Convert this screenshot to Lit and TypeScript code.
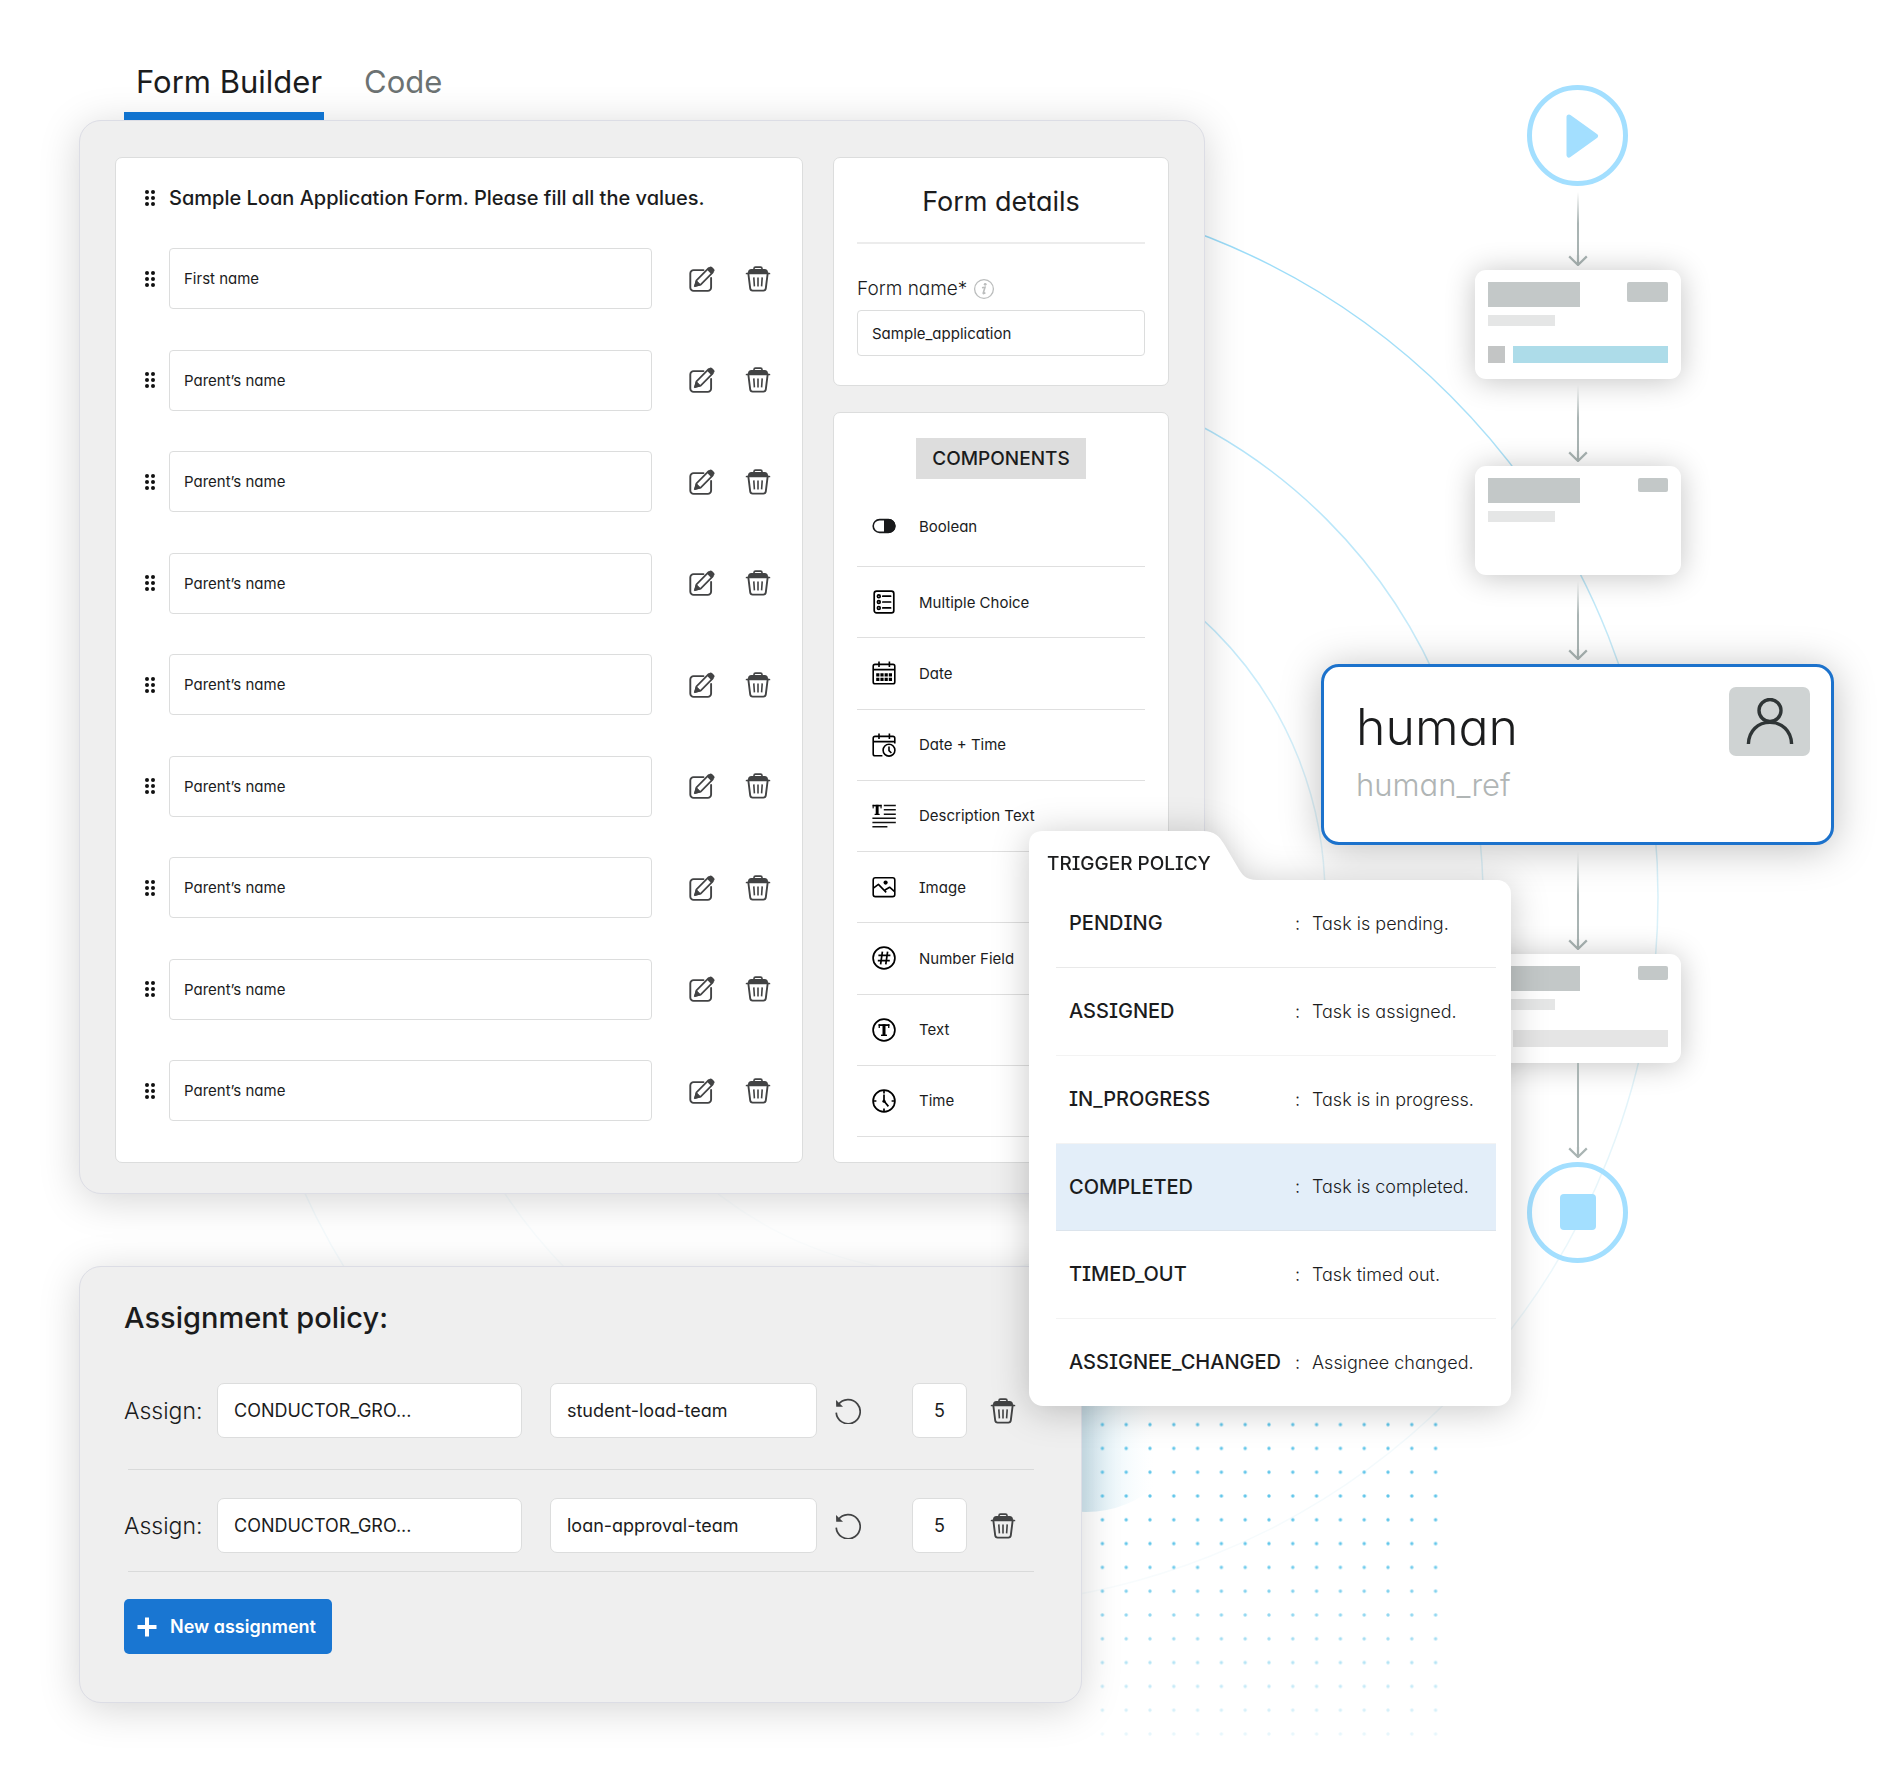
import { LitElement, html, css, svg, nothing } from "lit";
import { customElement, property } from "lit/decorators.js";

type IconName =
  | "grip" | "edit" | "trash" | "reset" | "plus" | "info" | "person"
  | "boolean" | "choice" | "date" | "datetime" | "description"
  | "image" | "number" | "text" | "time";

const ICONS: Record<IconName, { box: string; body: unknown }> = {
  grip: {
    box: "0 0 10 16",
    body: svg`<g fill="#111"><circle cx="2" cy="2" r="2"/><circle cx="8" cy="2" r="2"/><circle cx="2" cy="8" r="2"/><circle cx="8" cy="8" r="2"/><circle cx="2" cy="14" r="2"/><circle cx="8" cy="14" r="2"/></g>`,
  },
  edit: {
    box: "0 0 26 26",
    body: svg`<path d="M14.5 4.1H4.6A3.3 3.3 0 0 0 1.3 7.4V21.6A3.3 3.3 0 0 0 4.6 24.9H18.8A3.3 3.3 0 0 0 22.1 21.6V12" fill="none" stroke="#424344" stroke-width="1.9" stroke-linecap="round"/>
      <path d="M7.5 14.4L19.6 2.2L23.8 6.4L11.7 18.6L6.2 19.8Z" fill="#fff" stroke="#424344" stroke-width="1.7" stroke-linejoin="round"/>
      <path d="M7.3 14.6L11.5 18.8L5.4 20.6Z" fill="#424344" stroke="#424344" stroke-linejoin="round"/>
      <path d="M17.8 3.6L20.4 1C21.2.2 22.2.2 23 1L25 3C25.8 3.8 25.8 4.8 25 5.6L22.4 8.2Z" fill="#424344"/>`,
  },
  trash: {
    box: "0 0 26 26",
    body: svg`<path d="M9 3.4V2.6A1.5 1.5 0 0 1 10.5 1.1H15.5A1.5 1.5 0 0 1 17 2.6V3.4" fill="none" stroke="#424344" stroke-width="1.6"/>
      <path d="M3 6.6C3 4.3 4.2 3 6.4 3H19.6C21.8 3 23 4.3 23 6.6L25.2 6.9V8.3H.8V6.9Z" fill="#424344"/>
      <path d="M3.4 8L5.2 22.4A2.5 2.5 0 0 0 7.7 24.6H18.3A2.5 2.5 0 0 0 20.8 22.4L22.6 8" fill="none" stroke="#424344" stroke-width="1.9"/>
      <path d="M8.8 11.4L9.4 20.4M13 11.4V20.4M17.2 11.4L16.6 20.4" stroke="#424344" stroke-width="1.6"/>`,
  },
  reset: {
    box: "0 0 26 26",
    body: svg`<path d="M3.2 7A12 12 0 1 1 1.2 14.6" fill="none" stroke="#424344" stroke-width="1.7"/>
      <path d="M1 2L1.2 8.8H8Z" fill="#424344"/>`,
  },
  plus: { box: "0 0 20 20", body: svg`<path d="M10 .5V19.5M.5 10H19.5" stroke="#fff" stroke-width="4"/>` },
  info: {
    box: "0 0 22 22",
    body: svg`<circle cx="11" cy="11" r="9.4" fill="none" stroke="#bbbdbd" stroke-width="1.3"/>
      <circle cx="12.2" cy="6.3" r="1.4" fill="#bbbdbd"/><path d="M9 9.8L12 9.2L10.2 15.2Q10.2 16.2 12.4 14.6" fill="none" stroke="#bbbdbd" stroke-width="1.6"/>`,
  },
  person: {
    box: "0 0 48 48",
    body: svg`<g fill="none" stroke="#2f3536" stroke-width="3.4"><circle cx="24" cy="12.5" r="11"/><path d="M2.4 46C2.8 32.6 12 24.400 24 24.400S45.200 32.600 45.600 46"/></g>`,
  },
  boolean: {
    box: "0 0 24 24",
    body: svg`<rect x="1.200" y="5.600" width="21.600" height="12.800" rx="6.400" fill="#fff" stroke="#17181a" stroke-width="1.600"/><path d="M12 5H16.600A7 7 0 0 1 16.600 19H12Z" fill="#17181a"/>`,
  },
  choice: {
    box: "0 0 24 24",
    body: svg`<g fill="none" stroke="#000" stroke-width="1.700"><rect x="2.200" y="1.200" width="19.600" height="21.600" rx="2.400"/><circle cx="6.800" cy="6.200" r="1.400"/><circle cx="6.800" cy="12" r="1.400"/><circle cx="6.800" cy="17.900" r="1.400"/><path d="M10.800 6.200H18.600M10.800 12H18.600M10.800 17.900H18.600" stroke-linecap="round"/></g>`,
  },
  date: {
    box: "0 0 24 24",
    body: svg`<g fill="none" stroke="#000" stroke-width="1.600"><rect x="1.200" y="3.400" width="21.600" height="19.400" rx="1.800"/><path d="M1.200 8.600H22.800M7 .6V6M17.400 .6V6"/></g><g fill="#000"><path d="M4.200 12.200h3.200v3.200h-3.200zM8.400 12.200h3.200v3.200h-3.200zM12.600 12.200h3.200v3.200h-3.200zM16.800 12.200h3.200v3.200h-3.200zM4.200 16.700h3.200v3.200h-3.200zM8.400 16.700h3.200v3.200h-3.200zM12.600 16.700h3.200v3.200h-3.200zM16.800 16.700h3.200v3.200h-3.200z"/></g>`,
  },
  datetime: {
    box: "0 0 24 24",
    body: svg`<g fill="none" stroke="#000" stroke-width="1.600"><path d="M10.400 22.800H3A1.800 1.800 0 0 1 1.200 21V5.200A1.800 1.800 0 0 1 3 3.400H21A1.800 1.800 0 0 1 22.800 5.200V10.400M1.200 8.600H22.800M7 .6V6M17.400 .6V6"/><circle cx="17" cy="17.200" r="5.900" fill="#fff"/><path d="M17 13.400V17.600L19.400 20"/></g>`,
  },
  description: {
    box: "0 0 24 24",
    body: svg`<g stroke="#111" stroke-width="1.500"><path d="M11.800 1.400H23.800M11.800 5.800H23.800M11.800 10.200H23.800M.4 14.200H23.800M.4 18.600H23.800M.4 22.800H15.400"/></g><g fill="#000"><rect x=".6" y=".8" width="9" height="1.600"/><rect x=".6" y=".8" width="1.100" height="3.600"/><rect x="8.500" y=".8" width="1.100" height="3.600"/><rect x="3.700" y=".8" width="2.900" height="9.800"/><rect x="2.600" y="9.800" width="5.100" height="1.200"/></g>`,
  },
  image: {
    box: "0 0 24 24",
    body: svg`<g fill="none" stroke="#000" stroke-width="1.600" stroke-linejoin="round"><rect x="1.200" y="2.800" width="21.600" height="18.800" rx="2.200"/><path d="M1.400 13.200L6.400 9.400L14.200 17.400M13 15L17.600 12.200L22.600 16.600"/></g><circle cx="13.600" cy="7.600" r="2.100"/>`,
  },
  number: {
    box: "0 0 24 24",
    body: svg`<g fill="none" stroke="#000" stroke-width="1.700"><circle cx="12" cy="12" r="10.900"/><path d="M10.400 5.600L8.600 18.400M15.600 5.600L13.800 18.400M6.400 9.400H18.400M5.800 14.600H17.800"/></g>`,
  },
  text: {
    box: "0 0 24 24",
    body: svg`<circle cx="12" cy="12" r="10.900" fill="none" stroke="#000" stroke-width="1.700"/><g fill="#000"><rect x="6.600" y="6.200" width="10.800" height="1.800"/><rect x="6.600" y="6.200" width="1.300" height="3.800"/><rect x="16.100" y="6.200" width="1.300" height="3.800"/><rect x="10.500" y="6.200" width="3" height="11.200"/><rect x="9" y="16.600" width="6" height="1.400"/></g>`,
  },
  time: {
    box: "0 0 24 24",
    body: svg`<g fill="none" stroke="#000" stroke-width="1.700"><circle cx="12" cy="12" r="10.900"/><path d="M12 1.400V4.400M12 19.600V22.600M1.400 12H4.400M19.600 12H22.600M12 5.400V12L16.400 17.400"/></g><circle cx="12" cy="12.200" r="1.600"/>`,
  },
};

@customElement("ui-icon")
class UiIcon extends LitElement {
  @property() name: IconName = "grip";
  static styles = css`
    :host { display: inline-flex; flex: none; width: 26px; height: 26px; }
    svg { width: 100%; height: 100%; display: block; }
  `;
  render() {
    const icon = ICONS[this.name];
    return html`<svg viewBox=${icon.box} aria-hidden="true">${icon.body}</svg>`;
  }
}

/** Arrow that links two nodes of the workflow. */
@customElement("flow-arrow")
class FlowArrow extends LitElement {
  @property({ type: Boolean }) solid = false;
  static styles = css`
    :host { display: flex; flex-direction: column; align-items: center; box-sizing: border-box; padding: 6px 0 4px; }
    :host([solid]) { padding-top: 0; }
    .line { width: 2px; flex: 1; background: linear-gradient(rgba(169, 180, 179, 0), #a9b4b3 50%); }
    :host([solid]) .line { background: #a9b4b3; }
    svg { display: block; width: 20px; height: 11px; }
  `;
  render() {
    return html`<div class="line"></div>
      <svg viewBox="0 0 20 11" aria-hidden="true"><path d="M1.200 1.400L10 10L18.800 1.400M10 0V10" fill="none" stroke="#a9b4b3" stroke-width="2.200"/></svg>`;
  }
}

/** Workflow step drawn as a wireframe block. */
@customElement("flow-step")
class FlowStep extends LitElement {
  @property() footer: "none" | "active" | "plain" = "none";
  @property({ type: Boolean }) wide = false;
  static styles = css`
    :host { display: block; box-sizing: border-box; width: 206px; height: 109px; padding: 12px 13px 16px; border-radius: 11px; background: #fff; box-shadow: 0 2px 30px rgba(0, 0, 0, 0.24); }
    .body { display: flex; flex-direction: column; height: 100%; }
    .top { display: flex; justify-content: space-between; align-items: flex-start; }
    .title { width: 92px; height: 25px; background: #c3c8c8; }
    .tag { width: 30px; height: 14px; border-radius: 2px; background: #c3c8c8; }
    .tag.wide { width: 41px; height: 20px; }
    .sub { width: 67px; height: 11px; margin-top: 8px; background: #e5e6e6; }
    .foot { display: flex; gap: 8px; margin-top: auto; height: 17px; }
    .mark { width: 17px; background: #c3c5c5; }
    .bar { flex: 1; background: #addce9; }
    .plain .bar { background: #e5e5e5; }
  `;
  render() {
    return html`<div class="body">
      <div class="top"><div class="title"></div><div class="tag ${this.wide ? "wide" : ""}"></div></div>
      <div class="sub"></div>
      ${this.footer === "none"
        ? nothing
        : html`<div class="foot ${this.footer}"><div class="mark"></div><div class="bar"></div></div>`}
    </div>`;
  }
}

const FIELDS = ["First name", ...Array(8).fill("Parent’s name")];

const COMPONENTS: { icon: IconName; label: string }[] = [
  { icon: "boolean", label: "Boolean" },
  { icon: "choice", label: "Multiple Choice" },
  { icon: "date", label: "Date" },
  { icon: "datetime", label: "Date + Time" },
  { icon: "description", label: "Description Text" },
  { icon: "image", label: "Image" },
  { icon: "number", label: "Number Field" },
  { icon: "text", label: "Text" },
  { icon: "time", label: "Time" },
];

const POLICIES = [
  { state: "PENDING", text: "Task is pending." },
  { state: "ASSIGNED", text: "Task is assigned." },
  { state: "IN_PROGRESS", text: "Task is in progress." },
  { state: "COMPLETED", text: "Task is completed.", active: true },
  { state: "TIMED_OUT", text: "Task timed out." },
  { state: "ASSIGNEE_CHANGED", text: "Assignee changed." },
];

const ASSIGNMENTS = [
  { group: "CONDUCTOR_GRO...", team: "student-load-team", count: "5" },
  { group: "CONDUCTOR_GRO...", team: "loan-approval-team", count: "5" },
];

@customElement("app-root")
class AppRoot extends LitElement {
  static styles = css`
    :host { display: block; background: #fff; color: #1b1c1d; font-family: Inter, "Liberation Sans", sans-serif; font-feature-settings: "cv11", "cv08"; font-weight: 300; font-size: 16px; }
    * { box-sizing: border-box; }
    button, input { font: inherit; color: inherit; font-feature-settings: inherit; margin: 0; padding: 0; border: 0; background: none; }
    button { cursor: pointer; display: inline-flex; }
    h1, h2, h3, ul { margin: 0; padding: 0; font-weight: 400; list-style: none; }

    .stage { position: relative; overflow: hidden; min-height: 100vh; padding: 0 66px 60px 79px; display: grid; grid-template-columns: minmax(0, 1126fr) minmax(0, 513fr); column-gap: 116px; align-items: start; }
    .backdrop { position: absolute; left: 0; top: 0; width: 1900px; height: 1790px; }
    .main, .flow { position: relative; }

    .tabs { display: flex; align-items: flex-end; gap: 28px; height: 120px; padding-left: 45px; }
    .tab { height: 62px; padding: 0 2px 0 12px; border-bottom: 8px solid transparent; font-size: 31px; line-height: 47px; font-weight: 400; color: #6c7272; }
    .tab.current { border-bottom-color: #1073cf; color: #1b1c1d; }

    .panel { border: 1px solid #dcdde5; border-radius: 22px; background: #efefef; box-shadow: 0 6px 40px rgba(0, 0, 0, 0.17); }
    .builder { min-height: 60vh; padding: 36px 35px 30px 35px; display: grid; grid-template-columns: minmax(0, 688fr) minmax(0, 336fr); column-gap: 30px; }
    .card { border: 1px solid #dcdddd; border-radius: 7px; background: #fff; }
    .side { display: flex; flex-direction: column; gap: 26px; }

    .form { display: flex; flex-direction: column; padding: 26px 31px 41px 29px; }
    .form-head { display: flex; align-items: center; gap: 14px; margin-bottom: 36px; }
    .form-head h2 { font-size: 20px; line-height: 28px; font-weight: 500; }
    .grip { width: 10px; height: 16px; }
    .fields { flex: 1; display: flex; flex-direction: column; justify-content: space-between; }
    .field { display: flex; align-items: center; }
    .field .box { flex: 1; min-width: 0; height: 61px; margin: 0 37px 0 14px; padding: 0 14px; font-size: 15px; font-weight: 400; }
    .field button + button { margin-left: 30px; }
    .box { border: 1px solid #dcdddd; border-radius: 4px; background: #fff; }

    .details { padding: 28px 23px 29px; }
    .details h2 { text-align: center; font-size: 27px; line-height: 32px; padding-bottom: 24px; border-bottom: 2px solid #ececec; }
    .details label { display: flex; align-items: center; gap: 6px; margin: 33px 0 9px; font-size: 19px; line-height: 24px; }
    .details .info { width: 22px; height: 22px; }
    .details .box { display: block; width: 100%; height: 46px; padding: 0 14px; font-size: 15px; font-weight: 400; }

    .components { flex: 1; display: flex; flex-direction: column; padding: 25px 23px; }
    .badge { align-self: center; padding: 0 16px; background: #dddddd; font-size: 19px; line-height: 41px; font-weight: 500; }
    .components ul { flex: 1; display: flex; flex-direction: column; margin-top: 7px; }
    .components li { flex: 1; display: flex; align-items: center; gap: 23px; padding-left: 15px; min-height: 60px; border-bottom: 1px solid #dfdfdf; font-size: 15px; }
    .components li:first-child { flex: none; height: 81px; }
    .components ui-icon { width: 24px; height: 24px; }

    .assign { margin: 72px 123px 0 0; padding: 33px 47px 48px 44px; }
    .assign h2 { font-size: 29px; line-height: 36px; font-weight: 500; margin-bottom: 19px; }
    .row { display: flex; align-items: center; padding: 28px 18px 31px 0; font-size: 18px; }
    .row + hr + .row { padding-bottom: 18px; }
    .row .label { width: 93px; flex: none; font-size: 23px; }
    .row .box { height: 55px; min-width: 0; border-radius: 7px; border-width: 1px; padding: 0 16px; font-weight: 400; }
    .row .group { flex: 307; margin-right: 28px; }
    .row .team { flex: 264; margin-right: 18px; }
    .row .count { flex: none; width: 55px; margin: 0 23px 0 51px; padding: 0; text-align: center; }
    hr { border: 0; height: 1px; margin: 0 0 0 4px; background: #d9dada; }
    .add { align-items: center; gap: 13px; height: 55px; margin-top: 27px; padding: 0 16px 0 13px; border-radius: 5px; background: #1976d2; color: #fff; font-size: 18px; font-weight: 600; }
    .add ui-icon { width: 20px; height: 20px; }

    .flow { display: flex; flex-direction: column; align-items: center; padding-top: 85px; }
    .terminal { display: grid; place-items: center; width: 101px; height: 101px; border: 5px solid #a3dfff; border-radius: 50%; }
    .terminal svg { display: block; width: 48px; height: 48px; }
    .a1 { height: 84px; }
    .a2 { height: 87px; }
    .a3 { height: 89px; }
    .a4 { height: 109px; }
    .a5 { height: 99px; }
    .human { width: 100%; min-height: 181px; display: flex; justify-content: space-between; align-items: flex-start; padding: 20px 21px 20px 32px; border: 3px solid #1c72cc; border-radius: 18px; background: #fff; box-shadow: 0 4px 40px rgba(0, 0, 0, 0.26); }
    .human h3 { margin-top: 10px; font-size: 50px; line-height: 60px; font-weight: 350; }
    .human p { margin: 6px 0 0; font-size: 31px; line-height: 44px; color: #b0b5b5; }
    .avatar { display: grid; place-items: center; width: 81px; height: 69px; border-radius: 7px; background: #cfd3d3; }
    .avatar ui-icon { width: 48px; height: 48px; }

    .policy { position: absolute; left: 1029px; top: 831px; width: 482px; filter: drop-shadow(0 4px 18px rgba(0, 0, 0, 0.22)); }
    .policy-tab { position: relative; height: 49px; padding: 0 18px; }
    .policy-tab svg { position: absolute; left: 0; top: 0; width: 228px; height: 50px; }
    .policy-tab h2 { position: relative; font-size: 19px; line-height: 65px; font-weight: 500; }
    .policy-body { padding: 0 15px 0 27px; border-radius: 0 14px 14px 14px; background: #fff; }
    table { width: 100%; border-collapse: collapse; table-layout: fixed; }
    tr { height: 88px; border-bottom: 1px solid #f3f3f3; }
    tr:first-child { height: 87px; border-color: #e9e9e9; }
    tr.active { height: 87px; background: #e3eef9; border-color: #dce4ec; }
    tr:last-child { border-bottom: 0; }
    th, td { padding: 0; text-align: left; font-size: 18px; font-weight: 300; white-space: nowrap; }
    th { width: 239px; padding-left: 13px; font-size: 20px; font-weight: 500; }
    .colon { width: 17px; }
  `;

  private backdrop() {
    return html`<svg class="backdrop" viewBox="0 0 1900 1790" aria-hidden="true">
      <defs>
        <linearGradient id="arc" x1="0.75" y1="0" x2="0.5" y2="1">
          <stop offset="0.050" stop-color="#9bdcf8" /><stop offset="0.300" stop-color="#cfedf8" /><stop offset="0.600" stop-color="#e6f5fa" /><stop offset="0.750" stop-color="#f1f9fc" /><stop offset="1" stop-color="#f9fcfd" />
        </linearGradient>
        <linearGradient id="glow" x1="0.500" x2="0.820"><stop offset="0" stop-color="#d5eaf3" /><stop offset="1" stop-color="#f4fdff" stop-opacity="0" /></linearGradient>
        <linearGradient id="fade" x1="0" x2="0" y1="0" y2="1"><stop offset="0.400" stop-color="#fff" /><stop offset="1" stop-color="#fff" stop-opacity="0.100" /></linearGradient>
        <pattern id="dots" x="1090.500" y="1412.700" width="23.800" height="23.800" patternUnits="userSpaceOnUse"><circle cx="11.900" cy="11.900" r="1.700" fill="#62c6ea" /></pattern>
        <mask id="dotmask"><rect x="1090" y="1412" width="358" height="334" fill="url(#fade)" /></mask>
      </defs>
      <g fill="none" stroke="url(#arc)" stroke-width="1.500">
        <circle cx="949" cy="897" r="376" opacity="0.700" /><circle cx="949" cy="897" r="534" opacity="0.800" /><circle cx="949" cy="897" r="709" />
      </g>
      <circle cx="1086" cy="1406" r="106" fill="url(#glow)" />
      <rect x="1090.500" y="1412.700" width="357" height="333.200" fill="url(#dots)" mask="url(#dotmask)" />
    </svg>`;
  }

  private formBuilder() {
    return html`
      <nav class="tabs" aria-label="Editor mode">
        <button class="tab current">Form Builder</button>
        <button class="tab">Code</button>
      </nav>
      <section class="panel builder">
        <div class="card form">
          <div class="form-head">
            <ui-icon class="grip" name="grip"></ui-icon>
            <h2>Sample Loan Application Form. Please fill all the values.</h2>
          </div>
          <div class="fields">
            ${FIELDS.map(
              (name, i) => html`<div class="field">
                <ui-icon class="grip" name="grip"></ui-icon>
                <input class="box" type="text" .value=${name} aria-label="Field ${i + 1}" />
                <button aria-label="Edit field"><ui-icon name="edit"></ui-icon></button>
                <button aria-label="Delete field"><ui-icon name="trash"></ui-icon></button>
              </div>`
            )}
          </div>
        </div>
        <div class="side">
          <div class="card details">
            <h2>Form details</h2>
            <label for="form-name">Form name* <ui-icon class="info" name="info"></ui-icon></label>
            <input id="form-name" class="box" type="text" value="Sample_application" />
          </div>
          <div class="card components">
            <h3 class="badge">COMPONENTS</h3>
            <ul>
              ${COMPONENTS.map((c) => html`<li><ui-icon name=${c.icon}></ui-icon><span>${c.label}</span></li>`)}
            </ul>
          </div>
        </div>
      </section>`;
  }

  private assignment() {
    return html`<section class="panel assign">
      <h2>Assignment policy:</h2>
      ${ASSIGNMENTS.map(
        (a, i) => html`<div class="row">
            <label class="label" for="group-${i}">Assign:</label>
            <input class="box group" id="group-${i}" type="text" .value=${a.group} />
            <input class="box team" type="text" .value=${a.team} aria-label="Team" />
            <button aria-label="Reset"><ui-icon name="reset"></ui-icon></button>
            <input class="box count" type="text" .value=${a.count} aria-label="Count" />
            <button aria-label="Delete assignment"><ui-icon name="trash"></ui-icon></button>
          </div>
          <hr />`
      )}
      <button class="add"><ui-icon name="plus"></ui-icon>New assignment</button>
    </section>`;
  }

  private flow() {
    return html`<section class="flow" aria-label="Workflow">
      <div class="terminal"><svg viewBox="0 0 48 48" aria-hidden="true"><path d="M15 5L41.500 24L15 43Z" fill="#a3dfff" stroke="#a3dfff" stroke-width="5" stroke-linejoin="round"/></svg></div>
      <flow-arrow class="a1"></flow-arrow>
      <flow-step footer="active" wide></flow-step>
      <flow-arrow class="a2"></flow-arrow>
      <flow-step></flow-step>
      <flow-arrow class="a3"></flow-arrow>
      <div class="human">
        <div><h3>human</h3><p>human_ref</p></div>
        <div class="avatar"><ui-icon name="person"></ui-icon></div>
      </div>
      <flow-arrow class="a4"></flow-arrow>
      <flow-step footer="plain"></flow-step>
      <flow-arrow class="a5" solid></flow-arrow>
      <div class="terminal"><svg viewBox="0 0 48 48" aria-hidden="true"><rect x="6" y="5" width="36" height="36" rx="4" fill="#a3dfff"/></svg></div>
    </section>`;
  }

  private policy() {
    return html`<section class="policy">
      <div class="policy-tab">
        <svg viewBox="0 0 228 50" aria-hidden="true"><path d="M0 50V14Q0 0 14 0H174C185 0 190 5 195 13L208 35C213 44 217 49 228 49V50Z" fill="#fff"/></svg>
        <h2>TRIGGER POLICY</h2>
      </div>
      <div class="policy-body">
        <table>
          <tbody>
            ${POLICIES.map(
              (p) => html`<tr class=${p.active ? "active" : ""}><th scope="row">${p.state}</th><td class="colon">:</td><td>${p.text}</td></tr>`
            )}
          </tbody>
        </table>
      </div>
    </section>`;
  }

  render() {
    return html`<main class="stage">
      ${this.backdrop()}
      <div class="main">${this.formBuilder()}${this.assignment()}</div>
      ${this.flow()}
      ${this.policy()}
    </main>`;
  }
}
